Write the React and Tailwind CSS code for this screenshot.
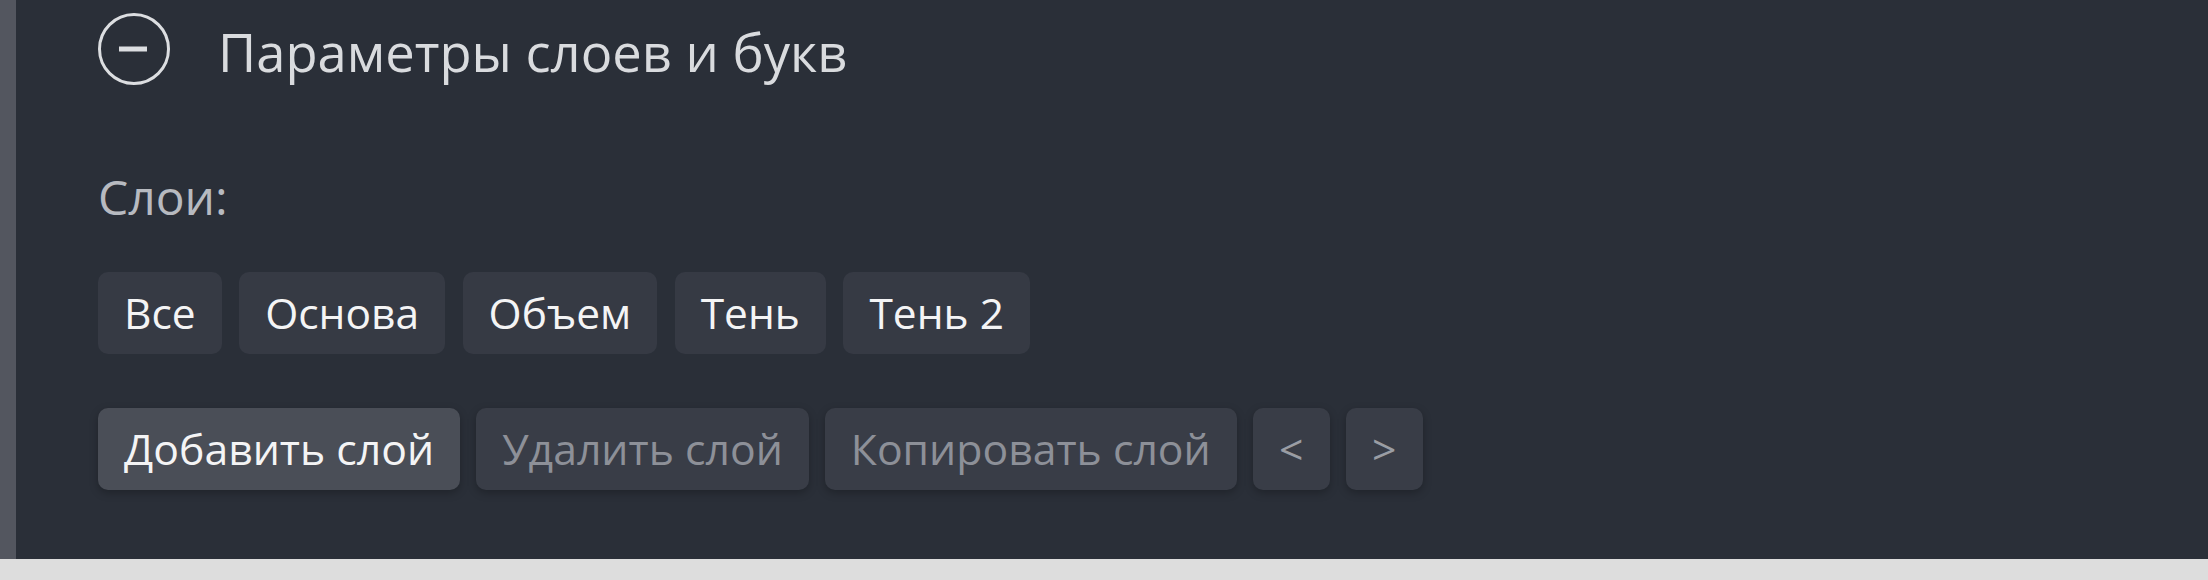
import { useState } from "react";

const layers = ["Все", "Основа", "Объем", "Тень", "Тень 2"];

function MinusCircle() {
  return (
    <svg width="72" height="72" viewBox="0 0 72 72" fill="none" className="shrink-0">
      <circle cx="36" cy="36" r="34.5" stroke="#dcdee1" strokeWidth="3" />
      <line x1="21" y1="36" x2="49" y2="36" stroke="#dcdee1" strokeWidth="5" />
    </svg>
  );
}

export default function App() {
  const [active] = useState(null);

  return (
    <div className="h-[580px] w-full bg-[#dddddd] font-['Open_Sans',sans-serif]">
      {/* panel */}
      <div className="h-[559px] border-l-[16px] border-[#53565f] bg-[#2a2f38] pl-[82px]">
        {/* header */}
        <div className="flex items-start pt-[13px]">
          <MinusCircle />
          <h2 className="ml-12 mt-[3px] text-[52.5px] leading-[72px] font-normal text-[#d9dbde]">
            Параметры слоев и букв
          </h2>
        </div>

        <p className="mt-[73px] text-[48px] leading-[72px] text-[#b7bac0]">Слои:</p>

        {/* tabs */}
        <div className="mt-[39px] flex gap-[17.5px]">
          {layers.map((name) => (
            <button
              key={name}
              className={`h-[82px] rounded-[10px] px-[26px] text-[42.5px] leading-[78px] text-[#f4f4f5] ${
                active === name ? "bg-[#4a4e57]" : "bg-[#363a44]"
              }`}
            >
              {name}
            </button>
          ))}
        </div>

        {/* actions */}
        <div className="mt-[54px] flex gap-4">
          <button className="h-[82px] rounded-[10px] bg-[#4a4e57] px-[26px] text-[42.75px] leading-[78px] text-[#f4f4f5] shadow-[0_3px_8px_rgba(0,0,0,0.25)]">
            Добавить слой
          </button>
          <button className="h-[82px] rounded-[10px] bg-[#393d47] px-[26px] text-[42.75px] leading-[78px] text-[#8d9098] shadow-[0_3px_8px_rgba(0,0,0,0.25)]">
            Удалить слой
          </button>
          <button className="h-[82px] rounded-[10px] bg-[#393d47] px-[26px] text-[42.75px] leading-[78px] text-[#8d9098] shadow-[0_3px_8px_rgba(0,0,0,0.25)]">
            Копировать слой
          </button>
          <button className="h-[82px] w-[77px] rounded-[10px] bg-[#393d47] text-[42.75px] leading-[78px] text-[#9a9da4] shadow-[0_3px_8px_rgba(0,0,0,0.25)]">
            &lt;
          </button>
          <button className="h-[82px] w-[77px] rounded-[10px] bg-[#393d47] text-[42.75px] leading-[78px] text-[#9a9da4] shadow-[0_3px_8px_rgba(0,0,0,0.25)]">
            &gt;
          </button>
        </div>
      </div>
    </div>
  );
}
